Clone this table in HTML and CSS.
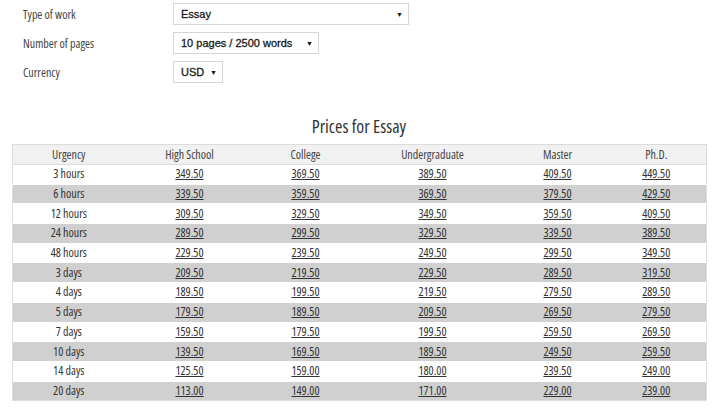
FILE: index.html
```html
<!DOCTYPE html>
<html>
<head>
<meta charset="utf-8">
<link rel="stylesheet" href="styles.css">
</head>
<body>
<div class="page">
  <div class="form">
    <div class="field">
      <span class="label">Type of work</span>
      <div class="select w-type"><span class="val">Essay</span><span class="arrow">▼</span></div>
    </div>
    <div class="field">
      <span class="label">Number of pages</span>
      <div class="select w-pages"><span class="val">10 pages / 2500 words</span><span class="arrow">▼</span></div>
    </div>
    <div class="field">
      <span class="label">Currency</span>
      <div class="select w-cur"><span class="val">USD</span><span class="arrow">▼</span></div>
    </div>
  </div>
  <h2 class="title">Prices for Essay</h2>
  <table class="prices">
    <colgroup>
      <col class="c1"><col class="c2"><col class="c3"><col class="c4"><col class="c5"><col class="c6">
    </colgroup>
    <thead>
      <tr><th>Urgency</th><th>High School</th><th>College</th><th>Undergraduate</th><th>Master</th><th>Ph.D.</th></tr>
    </thead>
    <tbody>
      <tr><td>3 hours</td><td><a href="#">349.50</a></td><td><a href="#">369.50</a></td><td><a href="#">389.50</a></td><td><a href="#">409.50</a></td><td><a href="#">449.50</a></td></tr>
      <tr><td>6 hours</td><td><a href="#">339.50</a></td><td><a href="#">359.50</a></td><td><a href="#">369.50</a></td><td><a href="#">379.50</a></td><td><a href="#">429.50</a></td></tr>
      <tr><td>12 hours</td><td><a href="#">309.50</a></td><td><a href="#">329.50</a></td><td><a href="#">349.50</a></td><td><a href="#">359.50</a></td><td><a href="#">409.50</a></td></tr>
      <tr><td>24 hours</td><td><a href="#">289.50</a></td><td><a href="#">299.50</a></td><td><a href="#">329.50</a></td><td><a href="#">339.50</a></td><td><a href="#">389.50</a></td></tr>
      <tr><td>48 hours</td><td><a href="#">229.50</a></td><td><a href="#">239.50</a></td><td><a href="#">249.50</a></td><td><a href="#">299.50</a></td><td><a href="#">349.50</a></td></tr>
      <tr><td>3 days</td><td><a href="#">209.50</a></td><td><a href="#">219.50</a></td><td><a href="#">229.50</a></td><td><a href="#">289.50</a></td><td><a href="#">319.50</a></td></tr>
      <tr><td>4 days</td><td><a href="#">189.50</a></td><td><a href="#">199.50</a></td><td><a href="#">219.50</a></td><td><a href="#">279.50</a></td><td><a href="#">289.50</a></td></tr>
      <tr><td>5 days</td><td><a href="#">179.50</a></td><td><a href="#">189.50</a></td><td><a href="#">209.50</a></td><td><a href="#">269.50</a></td><td><a href="#">279.50</a></td></tr>
      <tr><td>7 days</td><td><a href="#">159.50</a></td><td><a href="#">179.50</a></td><td><a href="#">199.50</a></td><td><a href="#">259.50</a></td><td><a href="#">269.50</a></td></tr>
      <tr><td>10 days</td><td><a href="#">139.50</a></td><td><a href="#">169.50</a></td><td><a href="#">189.50</a></td><td><a href="#">249.50</a></td><td><a href="#">259.50</a></td></tr>
      <tr><td>14 days</td><td><a href="#">125.50</a></td><td><a href="#">159.00</a></td><td><a href="#">180.00</a></td><td><a href="#">239.50</a></td><td><a href="#">249.00</a></td></tr>
      <tr><td>20 days</td><td><a href="#">113.00</a></td><td><a href="#">149.00</a></td><td><a href="#">171.00</a></td><td><a href="#">229.00</a></td><td><a href="#">239.00</a></td></tr>
    </tbody>
  </table>
</div>
</body>
</html>
```
FILE: styles.css
```css
html, body {
  margin: 0;
  padding: 0;
  background: #fff;
}
body {
  font-family: "Open Sans", "DejaVu Sans Condensed", sans-serif;
  font-stretch: 78%;
  color: #3a3a3a;
}
.page {
  padding: 3px 12px 0 12px;
}
.form {
  display: flex;
  flex-direction: column;
  gap: 7px;
}
.field {
  display: flex;
  align-items: center;
  height: 22px;
}
.label {
  width: 150px;
  padding-left: 11px;
  font-size: 12px;
  color: #444;
}
.select {
  display: flex;
  align-items: center;
  justify-content: space-between;
  box-sizing: border-box;
  height: 22px;
  border: 1px solid #d6d6d6;
  background: #fff;
  padding: 0 5px 0 7px;
  font-family: "Liberation Sans", Arial, sans-serif;
  font-stretch: normal;
  font-size: 11px;
  color: #1a1a1a;
  white-space: nowrap;
}
.select .val {
  -webkit-text-stroke: 0.3px #1a1a1a;
}
.select .arrow {
  font-size: 7px;
  color: #111;
}
.w-type { width: 236px; }
.w-pages { width: 146px; }
.w-cur { width: 50px; }
.title {
  margin: 0 0 8px 0;
  padding-top: 33px;
  line-height: 20px;
  text-align: center;
  font-weight: normal;
  font-size: 18px;
  color: #333;
}
.prices {
  width: 694px;
  border-collapse: collapse;
  table-layout: fixed;
  border: 1px solid #dcdcdc;
  font-size: 12px;
}
.c1 { width: 112px; }
.c2 { width: 130px; }
.c3 { width: 102px; }
.c4 { width: 152px; }
.c5 { width: 98px; }
.c6 { width: 100px; }
.prices th {
  font-weight: normal;
  height: 19px;
  padding: 0;
  background: #f1f1f1;
  color: #444;
  border-bottom: 1px solid #dcdcdc;
}
.prices td {
  text-align: center;
  height: 18.7px;
  padding: 0;
  border-top: 1px solid #fff;
  color: #333;
  line-height: 18px;
}
.prices tbody tr:nth-child(even) td {
  background: #d0d0d0;
}
.prices a {
  color: #333;
  text-decoration: underline;
}
```
